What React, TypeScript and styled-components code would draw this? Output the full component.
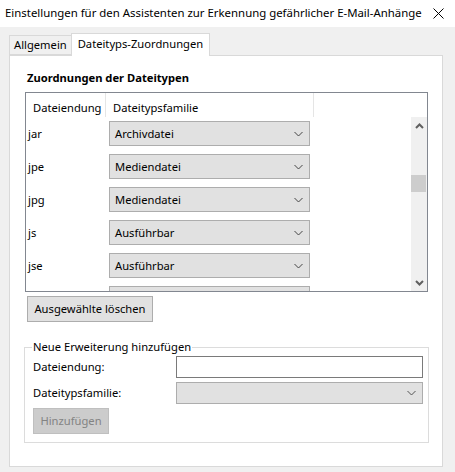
import React from "react";
import styled, { createGlobalStyle } from "styled-components";

const Global = createGlobalStyle`
  html, body { margin: 0; padding: 0; background: #f0f0f0; }
  body { font-family: "Noto Sans", "Open Sans", sans-serif; font-size: 11.2px; color: #000; }
  * { box-sizing: border-box; }
`;

const Window = styled.div`
  width: 455px;
  height: 472px;
  background: #f0f0f0;
  display: flex;
  flex-direction: column;
  overflow: hidden;
`;

const TitleBar = styled.div`
  height: 27px;
  background: #fff;
  display: flex;
  align-items: center;
  justify-content: space-between;
  padding: 0 11px 1px 5px;
`;

const TitleText = styled.span`
  font-size: 11.4px;
  line-height: 16px;
  white-space: nowrap;
`;

const Body = styled.div`
  padding: 7px 0 0 9px;
  display: flex;
  flex-direction: column;
`;

const TabRow = styled.div`
  display: flex;
  align-items: flex-end;
  height: 22px;
  margin-bottom: -1px;
  position: relative;
  z-index: 1;
`;

const Tab = styled.div<{ $active?: boolean }>`
  height: ${(p) => (p.$active ? 23 : 20)}px;
  padding: ${(p) => (p.$active ? "2px 6px 0 6px" : "1px 4px 0 4px")};
  background: ${(p) => (p.$active ? "#fff" : "#f0f0f0")};
  border: 1px solid #d9d9d9;
  border-bottom: ${(p) => (p.$active ? "none" : "1px solid #d9d9d9")};
  margin-left: ${(p) => (p.$active ? "-1px" : "0")};
  margin-bottom: ${(p) => (p.$active ? "0" : "1px")};
  line-height: 16px;
  white-space: nowrap;
`;

const Panel = styled.div`
  width: 434px;
  height: 412px;
  background: #fff;
  border: 1px solid #d9d9d9;
  padding-top: 14px;
  display: flex;
  flex-direction: column;
`;

const SectionTitle = styled.div`
  font-weight: bold;
  line-height: 16px;
  margin-left: 17px;
`;

const ListBox = styled.div`
  margin: 6px 0 0 15px;
  width: 403px;
  height: 200px;
  border: 1px solid #828790;
  display: flex;
  flex-direction: column;
  background: #fff;
`;

const HeaderRow = styled.div`
  height: 24px;
  display: flex;
`;

const HeaderCell = styled.div<{ $w: number }>`
  width: ${(p) => p.$w}px;
  border-right: 1px solid #e5e5e5;
  padding: 7px 0 0 7px;
  line-height: 16px;
  white-space: nowrap;
  overflow: hidden;
`;

const ListBody = styled.div`
  flex: 1;
  display: flex;
  overflow: hidden;
`;

const Rows = styled.div`
  flex: 1;
  overflow: hidden;
  padding-top: 4px;
`;

const Row = styled.div`
  height: 33px;
  display: flex;
  align-items: flex-start;
`;

const ExtCell = styled.div`
  width: 83px;
  height: 25px;
  display: flex;
  align-items: center;
  padding: 1px 0 0 2px;
  line-height: 16px;
`;

const Combo = styled.div<{ $w: number; $h: number }>`
  width: ${(p) => p.$w}px;
  height: ${(p) => p.$h}px;
  background: #e1e1e1;
  border: 1px solid #adadad;
  display: flex;
  align-items: center;
  justify-content: space-between;
  padding: 0 6px 0 5px;
  line-height: 16px;
`;

const Scrollbar = styled.div`
  width: 16px;
  background: #f0f0f0;
  display: flex;
  flex-direction: column;
  align-items: center;
`;

const ScrollArrow = styled.div`
  height: 17px;
  width: 16px;
  display: flex;
  align-items: center;
  justify-content: center;
`;

const ScrollTrack = styled.div`
  flex: 1;
  width: 16px;
  padding-top: 41px;
`;

const Thumb = styled.div`
  width: 15px;
  height: 17px;
  background: #cdcdcd;
`;

const Button = styled.div<{ $disabled?: boolean }>`
  display: flex;
  align-items: center;
  justify-content: center;
  line-height: 16px;
  height: 26px;
  padding: 0;
  background: ${(p) => (p.$disabled ? "#cccccc" : "#e1e1e1")};
  border: 1px solid ${(p) => (p.$disabled ? "#bfbfbf" : "#adadad")};
  color: ${(p) => (p.$disabled ? "#838383" : "#000")};
  white-space: nowrap;
`;

const DeleteButton = styled(Button)`
  margin: 4px 0 0 17px;
  width: 126px;
`;

const Group = styled.fieldset`
  margin: 17px 0 0 14px;
  width: 405px;
  height: 104px;
  border: 1px solid #dcdcdc;
  padding: 1px 5px 0 8px;
  display: flex;
  flex-direction: column;
`;

const Legend = styled.legend`
  padding: 0 1px;
  margin-left: -1px;
  line-height: 16px;
`;

const FieldRow = styled.div`
  display: flex;
  align-items: center;
  justify-content: space-between;
  margin-bottom: 4px;
`;

const Label = styled.span`
  line-height: 16px;
`;

const TextInput = styled.div`
  width: 247px;
  height: 22px;
  border: 1px solid #7a7a7a;
  background: #fff;
`;

const AddButton = styled(Button)`
  width: 76px;
  margin-top: 0;
  align-self: flex-start;
`;

const Chevron = ({ color = "#444" }: { color?: string }) => (
  <svg width="9" height="6" viewBox="0 0 9 6">
    <path d="M0.5 1 L4.5 5 L8.5 1" fill="none" stroke={color} strokeWidth="1" />
  </svg>
);

const ScrollChevron = ({ up }: { up?: boolean }) => (
  <svg width="9" height="6" viewBox="0 0 9 6">
    <path
      d={up ? "M1 5 L4.5 1.5 L8 5" : "M1 1 L4.5 4.5 L8 1"}
      fill="none"
      stroke="#606060"
      strokeWidth="2"
    />
  </svg>
);

const rows = [
  ["jar", "Archivdatei"],
  ["jpe", "Mediendatei"],
  ["jpg", "Mediendatei"],
  ["js", "Ausführbar"],
  ["jse", "Ausführbar"],
  ["", ""],
];

export default function App() {
  return (
    <Window>
      <Global />
      <TitleBar>
        <TitleText>
          Einstellungen für den Assistenten zur Erkennung gefährlicher E-Mail-Anhänge
        </TitleText>
        <svg width="11" height="11" viewBox="0 0 11 11">
          <path d="M0.5 0.5 L10.5 10.5 M10.5 0.5 L0.5 10.5" stroke="#000" strokeWidth="1" />
        </svg>
      </TitleBar>
      <Body>
        <TabRow>
          <Tab>Allgemein</Tab>
          <Tab $active>Dateityps-Zuordnungen</Tab>
        </TabRow>
        <Panel>
          <SectionTitle>Zuordnungen der Dateitypen</SectionTitle>
          <ListBox>
            <HeaderRow>
              <HeaderCell $w={80}>Dateiendung</HeaderCell>
              <HeaderCell $w={208}>Dateitypsfamilie</HeaderCell>
            </HeaderRow>
            <ListBody>
              <Rows>
                {rows.map(([ext, fam], i) => (
                  <Row key={i}>
                    <ExtCell>{ext}</ExtCell>
                    <Combo $w={201} $h={25}>
                      <span>{fam}</span>
                      <Chevron />
                    </Combo>
                  </Row>
                ))}
              </Rows>
              <Scrollbar>
                <ScrollArrow>
                  <ScrollChevron up />
                </ScrollArrow>
                <ScrollTrack>
                  <Thumb />
                </ScrollTrack>
                <ScrollArrow>
                  <ScrollChevron />
                </ScrollArrow>
              </Scrollbar>
            </ListBody>
          </ListBox>
          <DeleteButton role="button">Ausgewählte löschen</DeleteButton>
          <Group>
            <Legend>Neue Erweiterung hinzufügen</Legend>
            <FieldRow>
              <Label>Dateiendung:</Label>
              <TextInput />
            </FieldRow>
            <FieldRow>
              <Label>Dateitypsfamilie:</Label>
              <Combo $w={247} $h={22}>
                <span />
                <Chevron color="#555" />
              </Combo>
            </FieldRow>
            <AddButton role="button" aria-disabled $disabled>
              Hinzufügen
            </AddButton>
          </Group>
        </Panel>
      </Body>
    </Window>
  );
}
